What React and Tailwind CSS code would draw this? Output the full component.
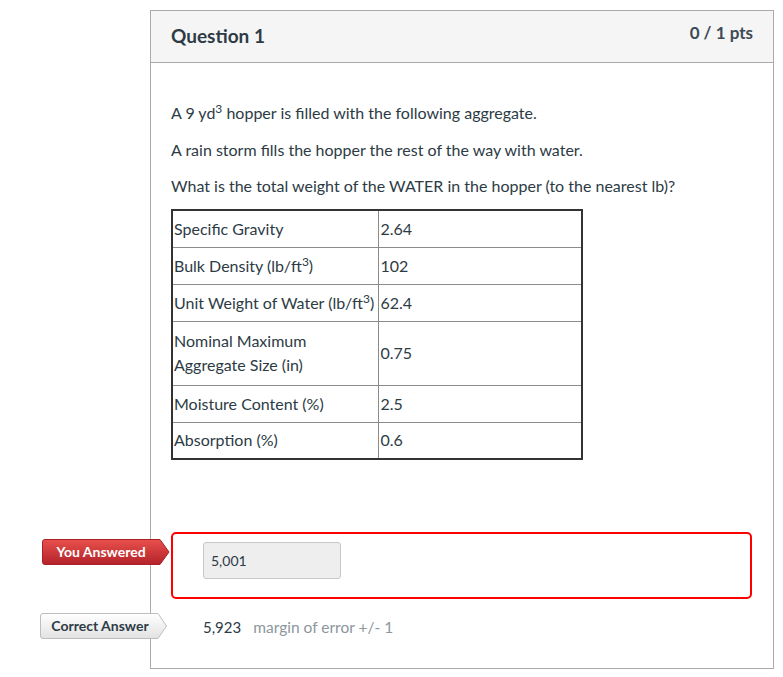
import React from 'react'

const rows = [
  ['Specific Gravity', '2.64'],
  [<>Bulk Density (lb/ft<sup>3</sup>)</>, '102'],
  [<>Unit Weight of Water (lb/ft<sup>3</sup>)</>, '62.4'],
  [<>Nominal Maximum<br />Aggregate Size (in)</>, '0.75', true],
  ['Moisture Content (%)', '2.5'],
  ['Absorption (%)', '0.6'],
]

function RedBadge() {
  return (
    <div className="absolute left-[-131px] top-[5px] w-[128px] h-[26px]">
      <svg className="absolute inset-0" width="128" height="26" viewBox="0 0 128 26">
        <defs>
          <linearGradient id="rg" x1="0" y1="0" x2="0" y2="1">
            <stop offset="0" stopColor="#e8504c" />
            <stop offset="1" stopColor="#b3232a" />
          </linearGradient>
        </defs>
        <path d="M3 0.5 H118 L127 13 L118 25.5 H3 Q0.5 25.5 0.5 23 V3 Q0.5 0.5 3 0.5 Z" fill="url(#rg)" stroke="#a82127" strokeWidth="1" />
      </svg>
      <div className="relative w-[118px] h-full flex items-center justify-center text-white font-bold text-[14px]">
        You Answered
      </div>
    </div>
  )
}

function GrayBadge() {
  return (
    <div className="absolute left-[-131px] top-[-14px] w-[128px] h-[26px]">
      <svg className="absolute inset-0" width="128" height="26" viewBox="0 0 128 26">
        <defs>
          <linearGradient id="gg" x1="0" y1="0" x2="0" y2="1">
            <stop offset="0" stopColor="#ffffff" />
            <stop offset="1" stopColor="#e2e2e2" />
          </linearGradient>
        </defs>
        <path d="M3 0.5 H118 L126.5 13 L118 25.5 H3 Q0.5 25.5 0.5 23 V3 Q0.5 0.5 3 0.5 Z" fill="url(#gg)" stroke="#bdbdbd" strokeWidth="1" />
      </svg>
      <div className="relative w-[120px] h-full flex items-center justify-center text-[#2d3b45] font-bold text-[14px]">
        Correct Answer
      </div>
    </div>
  )
}

export default function App() {
  return (
    <div className="min-h-[677px] bg-white pl-[150px] pt-[10px] font-['Lato',sans-serif] text-[#2d3b45]">
      <div className="w-[624px] h-[659px] border border-[#aaaaaa] flex flex-col">
        {/* Header */}
        <div className="h-[52px] shrink-0 bg-[#f5f5f5] border-b border-[#aaaaaa] flex items-start justify-between px-5">
          <div className="pt-[13px] text-[19px] font-bold leading-[24px]">Question 1</div>
          <div className="pt-[11px] text-[17px] font-bold leading-[22px] text-[#3d4a55]">0 / 1 pts</div>
        </div>

        {/* Body */}
        <div className="pl-5 pr-[21px] pt-[39px] text-[16px] leading-[22px]">
          <p className="mb-[15px]">
            A 9 yd<sup>3</sup> hopper is filled with the following aggregate.
          </p>
          <p className="mb-[14px]">A rain storm fills the hopper the rest of the way with water.</p>
          <p className="mb-[12px]">What is the total weight of the WATER in the hopper (to the nearest lb)?</p>

          <table className="border-collapse border-2 border-[#333333] w-[412px] text-[16px] table-fixed">
            <tbody>
              {rows.map(([label, value, tall], i) => (
                <tr key={i} className={tall ? 'h-[64px]' : 'h-[37px]'}>
                  <td className="border border-[#8c8c8c] w-[206px] pl-[1px] pr-0 leading-[24px] align-middle whitespace-nowrap">{label}</td>
                  <td className="border border-[#8c8c8c] px-[2px] align-middle">{value}</td>
                </tr>
              ))}
            </tbody>
          </table>

          {/* Answers */}
          <div className="relative mt-[72px] h-[67px] border-2 border-[#ff0000] rounded-[5px]">
            <RedBadge />
            <div className="ml-[30px] mt-[8px] w-[138px] h-[37px] bg-[#eeeeee] border border-[#c8c8c8] rounded-[3px] flex items-center pl-[7px] text-[14px]">
              5,001
            </div>
          </div>

          <div className="relative mt-[28px] flex items-center pl-[32px] h-0">
            <GrayBadge />
            <span className="text-[15px]">5,923</span>
            <span className="ml-[12px] text-[15.5px] text-[#8b969e]">margin of error +/- 1</span>
          </div>
        </div>
      </div>
    </div>
  )
}
